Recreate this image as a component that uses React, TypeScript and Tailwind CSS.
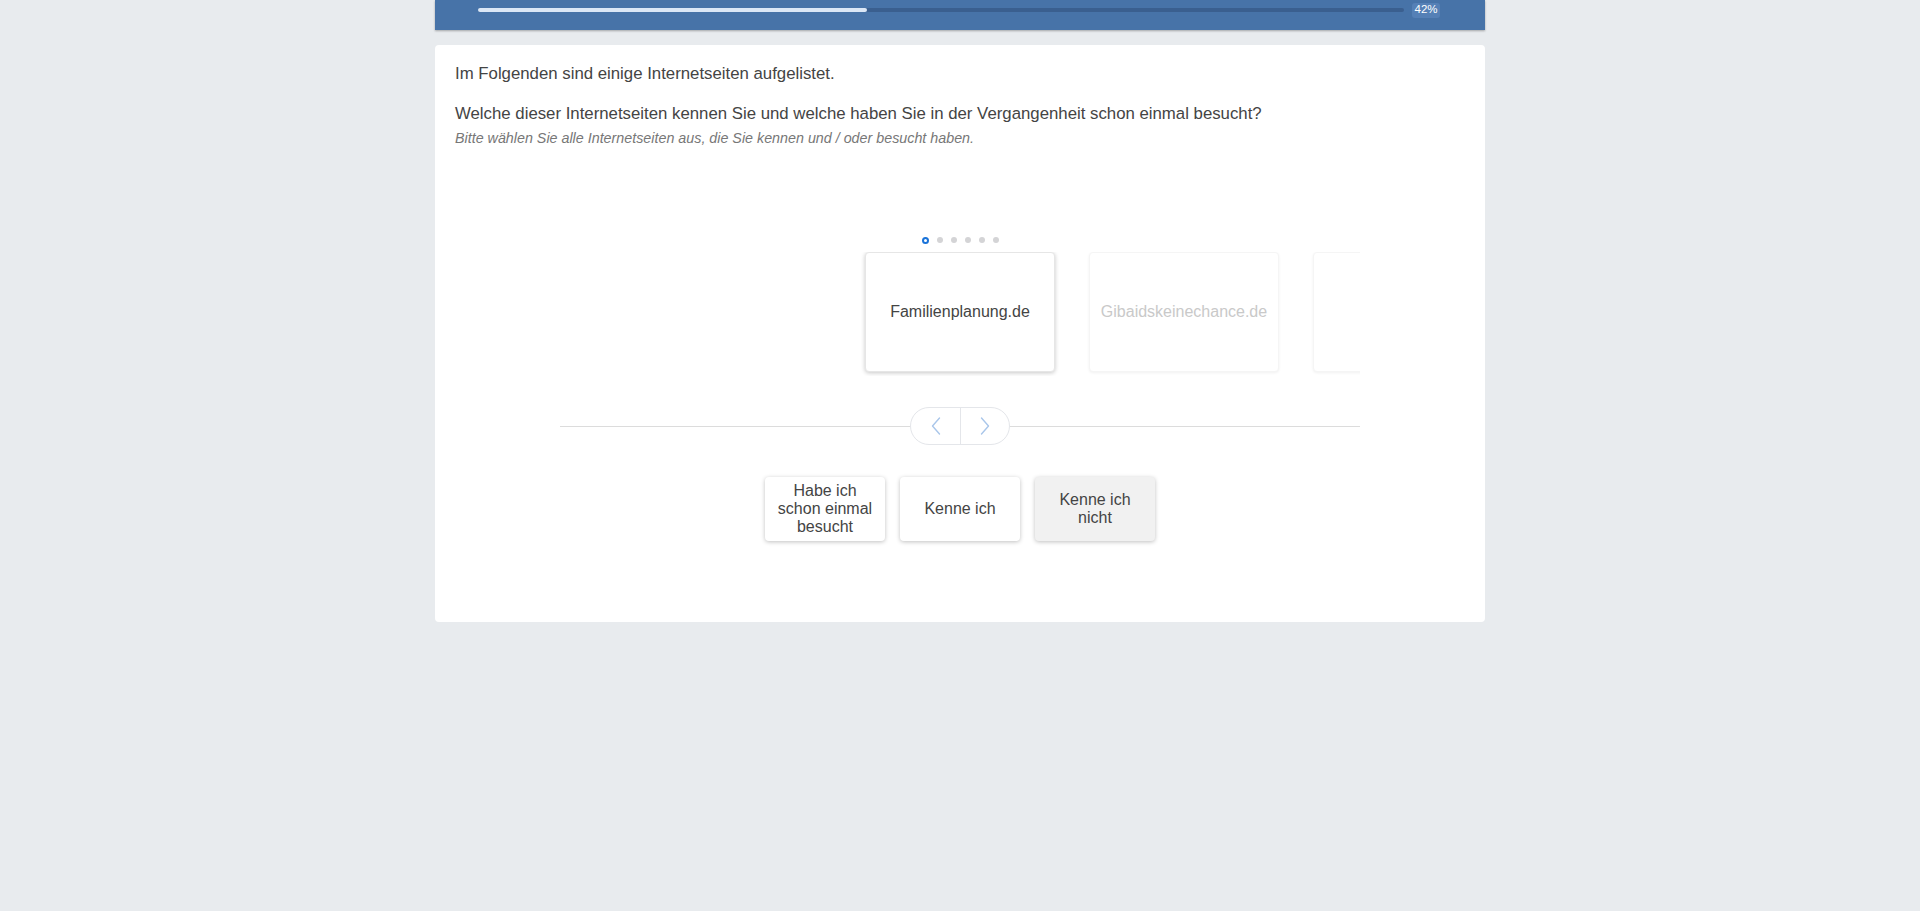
import React from "react";

const font = { fontFamily: '"Liberation Sans", Arial, sans-serif' };

function ChevronLeft() {
  return (
    <svg width="10" height="18" viewBox="0 0 10 18" fill="none">
      <path d="M8.5 1 L1.5 9 L8.5 17" stroke="#a9c6ea" strokeWidth="1.4" strokeLinecap="round" strokeLinejoin="round" />
    </svg>
  );
}

function ChevronRight() {
  return (
    <svg width="10" height="18" viewBox="0 0 10 18" fill="none">
      <path d="M1.5 1 L8.5 9 L1.5 17" stroke="#a9c6ea" strokeWidth="1.4" strokeLinecap="round" strokeLinejoin="round" />
    </svg>
  );
}

export default function App() {
  const slides = ["Familienplanung.de", "Gibaidskeinechance.de", ""];
  return (
    <div className="min-h-screen w-full bg-[#e8ebee]" style={font}>
      <div className="mx-auto w-[1050px]">
        {/* header */}
        <div className="h-[30px] bg-[#4773a8] shadow-[0_1px_2px_rgba(0,0,0,0.3)] pl-[43px] pr-[45px] pt-[3px]">
          <div className="flex h-[14px] items-center gap-[8px]">
            <div className="h-[4px] flex-1 rounded-full bg-[#3a5f8f]">
              <div className="h-[4px] w-[42%] rounded-full bg-[#dbe7f6]" />
            </div>
            <div className="flex h-[15px] w-[28px] items-center justify-center rounded-[3px] bg-[#5580b6] text-[11.5px] leading-none text-white">
              42%
            </div>
          </div>
        </div>

        {/* card */}
        <div className="mt-[15px] h-[577px] rounded-[4px] bg-white px-[20px] pt-[18px] text-[#444]">
          <p className="text-[16.8px] leading-[22px]">Im Folgenden sind einige Internetseiten aufgelistet.</p>
          <p className="mt-[18px] text-[16.8px] leading-[22px]">
            Welche dieser Internetseiten kennen Sie und welche haben Sie in der Vergangenheit schon einmal besucht?
          </p>
          <p className="mt-[5px] text-[14.3px] italic leading-[16px] text-[#777]">
            Bitte wählen Sie alle Internetseiten aus, die Sie kennen und / oder besucht haben.
          </p>

          {/* carousel */}
          <div className="mx-auto mt-[89px] w-[800px]">
            <div className="flex h-[10px] items-center justify-center gap-[8px]">
              <span className="h-[7px] w-[7px] rounded-full border-[2px] border-[#1a73d9] bg-white" />
              <span className="h-[6px] w-[6px] rounded-full bg-[#d4d4d6]" />
              <span className="h-[6px] w-[6px] rounded-full bg-[#d4d4d6]" />
              <span className="h-[6px] w-[6px] rounded-full bg-[#d4d4d6]" />
              <span className="h-[6px] w-[6px] rounded-full bg-[#d4d4d6]" />
              <span className="h-[6px] w-[6px] rounded-full bg-[#d4d4d6]" />
            </div>
            <div className="mt-[7px] overflow-hidden pb-[4px]">
              <div className="flex gap-[34px] pl-[305px]">
                {slides.map((s, i) => (
                  <div
                    key={i}
                    className={
                      i === 0
                        ? "flex h-[120px] w-[190px] shrink-0 items-center justify-center rounded-[4px] border border-[#e6e6e6] bg-white text-[16px] text-[#444] shadow-[0_1px_4px_rgba(0,0,0,0.22)]"
                        : "flex h-[120px] w-[190px] shrink-0 items-center justify-center rounded-[4px] border border-[#f5f5f5] bg-white text-[16px] text-[#c9c9c9] shadow-[0_1px_3px_rgba(0,0,0,0.06)]"
                    }
                  >
                    {s}
                  </div>
                ))}
              </div>
            </div>

            {/* nav */}
            <div className="relative mt-[31px] flex h-[38px] items-center justify-center">
              <div className="absolute left-0 right-0 top-[19px] h-px bg-[#dcdcdc]" />
              <div className="relative flex h-[38px] w-[100px] overflow-hidden rounded-full border border-[#e4e6ea] bg-white">
                <div className="flex w-1/2 items-center justify-center">
                  <ChevronLeft />
                </div>
                <div className="flex w-1/2 items-center justify-center border-l border-[#e4e6ea]">
                  <ChevronRight />
                </div>
              </div>
            </div>
          </div>

          {/* answer buttons */}
          <div className="mt-[32px] flex justify-center gap-[15px]">
            <button className="flex h-[64px] w-[120px] items-center justify-center rounded-[4px] bg-white px-[8px] text-center text-[16px] leading-[18px] text-[#444] shadow-[0_1px_4px_rgba(0,0,0,0.25)]">
              Habe ich schon einmal besucht
            </button>
            <button className="flex h-[64px] w-[120px] items-center justify-center rounded-[4px] bg-white px-[8px] text-center text-[16px] leading-[18px] text-[#444] shadow-[0_1px_4px_rgba(0,0,0,0.25)]">
              Kenne ich
            </button>
            <button className="flex h-[64px] w-[120px] items-center justify-center rounded-[4px] bg-[#f1f1f1] px-[8px] text-center text-[16px] leading-[18px] text-[#444] shadow-[0_1px_4px_rgba(0,0,0,0.25)]">
              Kenne ich nicht
            </button>
          </div>
        </div>
      </div>
    </div>
  );
}
